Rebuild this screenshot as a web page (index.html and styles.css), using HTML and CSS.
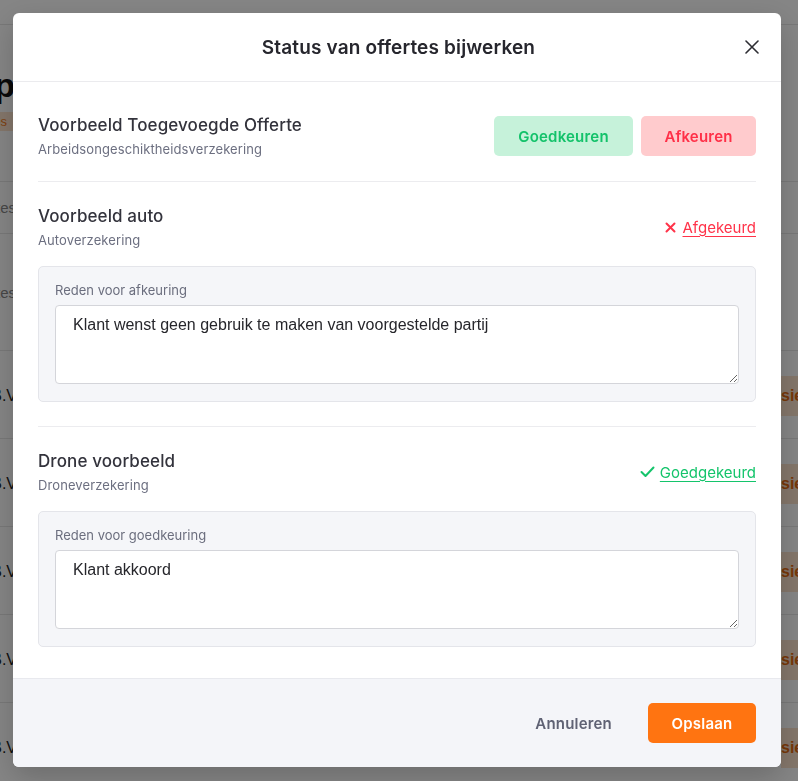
FILE: index.html
```html
<!DOCTYPE html>
<html lang="nl">
<head>
<meta charset="utf-8">
<title>Status van offertes bijwerken</title>
<link rel="stylesheet" href="styles.css">
</head>
<body>
<div class="page">
  <div class="prow nav"><div class="lc"></div><div class="mc"></div><div class="rc"></div></div>
  <div class="prow head"><div class="lc"><span class="big">Top</span></div><div class="mc"></div><div class="rc"></div></div>
  <div class="prow tags"><div class="lc"><span class="pbadge">Provisies</span></div><div class="mc"></div><div class="rc"></div></div>
  <div class="prow thead"><div class="lc"><span class="muted">Offertes</span></div><div class="mc"></div><div class="rc"></div></div>
  <div class="prow filt"><div class="lc"><span class="muted">Offertes</span></div><div class="mc"></div><div class="rc"></div></div>
  <div class="prow trow"><div class="lc"><span class="dark">Bedrijf B.V</span></div><div class="mc"></div><div class="rc"><span class="rbadge">sie</span></div></div>
  <div class="prow trow"><div class="lc"><span class="dark">Bedrijf B.V</span></div><div class="mc"></div><div class="rc"><span class="rbadge">sie</span></div></div>
  <div class="prow trow"><div class="lc"><span class="dark">Bedrijf B.V</span></div><div class="mc"></div><div class="rc"><span class="rbadge">sie</span></div></div>
  <div class="prow trow"><div class="lc"><span class="dark">Bedrijf B.V</span></div><div class="mc"></div><div class="rc"><span class="rbadge">sie</span></div></div>
  <div class="prow trow"><div class="lc"><span class="dark">Bedrijf B.V</span></div><div class="mc"></div><div class="rc"><span class="rbadge">sie</span></div></div>
</div>

<div class="overlay">
  <div class="modal">
    <div class="modal-header">
      <span></span>
      <h1 class="modal-title">Status van offertes bijwerken</h1>
      <button class="close" aria-label="Sluiten">
        <svg width="14" height="14" viewBox="0 0 14 14"><path d="M1 1 L13 13 M13 1 L1 13" stroke="#2d2d33" stroke-width="1.6" fill="none" stroke-linecap="round"/></svg>
      </button>
    </div>

    <div class="modal-body">
      <section class="item">
        <div class="item-head">
          <div>
            <div class="item-title">Voorbeeld Toegevoegde Offerte</div>
            <div class="item-sub">Arbeidsongeschiktheidsverzekering</div>
          </div>
          <div class="actions">
            <button class="btn btn-approve">Goedkeuren</button>
            <button class="btn btn-reject">Afkeuren</button>
          </div>
        </div>
      </section>

      <section class="item item-reason">
        <div class="item-head">
          <div>
            <div class="item-title">Voorbeeld auto</div>
            <div class="item-sub">Autoverzekering</div>
          </div>
          <a class="status status-rejected" href="#">
            <svg width="11" height="11" viewBox="0 0 11 11"><path d="M1.5 1.5 L9.5 9.5 M9.5 1.5 L1.5 9.5" stroke="#ff3349" stroke-width="2" fill="none" stroke-linecap="round"/></svg>
            <span>Afgekeurd</span>
          </a>
        </div>
        <div class="reason">
          <label class="reason-label">Reden voor afkeuring</label>
          <textarea class="reason-input">Klant wenst geen gebruik te maken van voorgestelde partij</textarea>
        </div>
      </section>

      <section class="item item-reason">
        <div class="item-head">
          <div>
            <div class="item-title">Drone voorbeeld</div>
            <div class="item-sub">Droneverzekering</div>
          </div>
          <a class="status status-approved" href="#">
            <svg width="15" height="12" viewBox="0 0 15 12"><path d="M1.5 6 L5.5 10 L13.5 1.5" stroke="#14c46b" stroke-width="2" fill="none" stroke-linecap="round" stroke-linejoin="round"/></svg>
            <span>Goedgekeurd</span>
          </a>
        </div>
        <div class="reason">
          <label class="reason-label">Reden voor goedkeuring</label>
          <textarea class="reason-input">Klant akkoord</textarea>
        </div>
      </section>
    </div>

    <div class="modal-footer">
      <button class="btn-link">Annuleren</button>
      <button class="btn btn-save">Opslaan</button>
    </div>
  </div>
</div>
</body>
</html>
```

FILE: styles.css
```css
* { box-sizing: border-box; }
html, body { margin: 0; padding: 0; }
body {
  width: 798px;
  height: 781px;
  overflow: hidden;
  background: #ffffff;
  font-family: "Inter", "Noto Sans", sans-serif;
}

/* background page (mostly hidden by the modal) */
.page { display: flex; flex-direction: column; }
.prow { display: flex; }
.lc { width: 13px; overflow: hidden; display: flex; justify-content: flex-end; align-items: center; white-space: nowrap; }
.mc { flex: 1; }
.rc { width: 17px; overflow: hidden; display: flex; align-items: center; white-space: nowrap; }
.nav { height: 25px; border-bottom: 1px solid #e6e6e6; }
.head { height: 82px; }
.head .lc { align-items: flex-end; padding-bottom: 2px; }
.big { font-family: "Liberation Sans", sans-serif; font-weight: 700; font-size: 34px; color: #111; margin-right: -2px; }
.tags { height: 74px; align-items: flex-start; }
.tags .lc { align-items: flex-start; padding-top: 5px; }
.pbadge { background: #fde3cc; color: #f07b22; font-size: 13px; line-height: 19px; padding: 0 6px; font-family: "Liberation Sans", sans-serif; }
.thead { height: 53px; border-top: 1px solid #e6e6e6; border-bottom: 1px solid #e6e6e6; }
.filt { height: 117px; border-bottom: 1px solid #e6e6e6; }
.muted { font-family: "Liberation Sans", sans-serif; font-size: 15px; color: #888; margin-right: -3px; }
.trow { height: 88px; border-bottom: 1px solid #e6e6e6; }
.trow .lc, .trow .rc { align-items: flex-start; padding-top: 36px; }
.dark { font-family: "Liberation Sans", sans-serif; font-size: 16px; color: #222; margin-right: -4px; }
.rbadge { background: #fde3cc; color: #e36a10; font-family: "Liberation Sans", sans-serif; font-weight: 700; font-size: 16px; padding: 11px 8px 11px 0; margin-top: -11px; }

/* overlay + modal */
.overlay {
  position: fixed;
  inset: 0;
  background: rgba(0, 0, 0, 0.48);
  display: flex;
  align-items: flex-start;
  padding: 13px 0 0 13px;
}
.modal {
  width: 768px;
  background: #ffffff;
  border-radius: 6px;
  overflow: hidden;
  box-shadow: 0 10px 30px rgba(0, 0, 0, 0.2);
}
.modal-header {
  height: 69px;
  border-bottom: 1px solid #ebebee;
  display: grid;
  grid-template-columns: 1fr auto 1fr;
  align-items: center;
  padding: 0 22px 0 25px;
}
.modal-title {
  margin: 0;
  font-size: 19px;
  font-weight: 600;
  color: #26262d;
  letter-spacing: 0.15px;
  padding-top: 1px;
}
.close {
  justify-self: end;
  border: 0;
  background: none;
  padding: 0;
  width: 14px;
  height: 14px;
  display: flex;
  cursor: pointer;
}

.modal-body { padding: 9px 25px 7px; }
.item { padding: 22px 0; }
.item + .item { border-top: 1px solid #ececef; }
.item-reason { padding-bottom: 24px; }
.item-head { display: flex; justify-content: space-between; align-items: center; }
.item-title { font-size: 17px; line-height: 24px; font-weight: 500; color: #33333c; letter-spacing: 0.1px; }
.item-sub { font-size: 13px; line-height: 20px; margin-top: 2px; color: #6c6f80; letter-spacing: 0.1px; }

.actions { display: flex; gap: 8px; }
.btn {
  height: 40px;
  border: 0;
  border-radius: 5px;
  font-family: inherit;
  font-size: 15px;
  font-weight: 600;
  padding: 0 20px;
  cursor: pointer;
  letter-spacing: 0.2px;
}
.btn-approve { background: #c6f2da; color: #13c26a; width: 139px; }
.btn-reject { background: #ffcbcd; color: #ff2f47; width: 115px; }

.status {
  display: flex;
  align-items: center;
  gap: 7px;
  font-size: 15px;
  text-decoration: none;
}
.status span { text-decoration: underline; text-underline-offset: 3px; text-decoration-thickness: 1px; }
.status-rejected { color: #ff3349; }
.status-approved { color: #14c46b; gap: 5px; }

.reason {
  margin-top: 16px;
  background: #f5f6f9;
  border: 1px solid #e4e5ea;
  border-radius: 5px;
  padding: 13px 16px 17px;
  display: flex;
  flex-direction: column;
}
.reason-label { font-size: 13px; line-height: 20px; color: #6b6e7e; }
.reason-input {
  margin-top: 5px;
  height: 79px;
  width: 100%;
  border: 1px solid #d4d5da;
  border-radius: 4px;
  background: #ffffff;
  padding: 9px 17px;
  font-family: "Liberation Sans", "Helvetica", sans-serif;
  font-size: 16px;
  line-height: 20px;
  color: #26262b;
  resize: vertical;
}

.modal-footer {
  background: #f4f5f9;
  border-top: 1px solid #e8e9ee;
  padding: 24px 25px 24px;
  display: flex;
  justify-content: flex-end;
  align-items: center;
  gap: 36px;
}
.btn-link {
  border: 0;
  background: none;
  padding: 0;
  font-family: inherit;
  font-size: 15px;
  font-weight: 600;
  color: #5f6274;
  cursor: pointer;
  letter-spacing: 0.2px;
}
.btn-save { background: #ff7411; color: #ffffff; width: 108px; }
```
